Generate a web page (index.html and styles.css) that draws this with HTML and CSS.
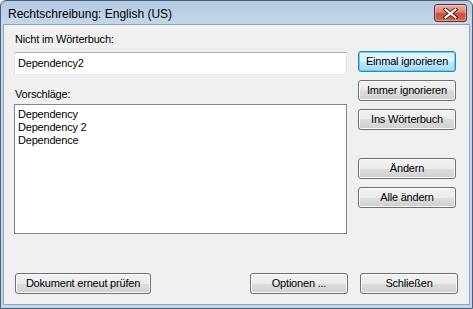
FILE: index.html
```html
<!DOCTYPE html>
<html>

<head>
    <title>Rechtschreibung: English (US)</title>
    <meta name="viewport" content="width=device-width, initial-scale=1.0">
    <link rel="stylesheet" href="styles.css">
</head>

<body>
    <div class="window">
        <header class="titlebar">
            <span class="title">Rechtschreibung: English (US)</span>
            <span class="close">
                <svg width="17" height="11" viewBox="0 0 17 11">
                    <path d="M3.5 1.5 L13.5 9.5 M13.5 1.5 L3.5 9.5" stroke="#5a1a10" stroke-width="4" stroke-linecap="square" />
                    <path d="M3.5 1.5 L13.5 9.5 M13.5 1.5 L3.5 9.5" stroke="#fff" stroke-width="2" stroke-linecap="square" />
                </svg>
            </span>
        </header>
        <main class="client">
            <div class="main">
                <div class="left">
                    <label class="label first">Nicht im Wörterbuch:</label>
                    <div class="textbox">Dependency2</div>
                    <label class="label second">Vorschläge:</label>
                    <ul class="listbox">
                        <li>Dependency</li>
                        <li>Dependency 2</li>
                        <li>Dependence</li>
                    </ul>
                </div>
                <div class="right">
                    <button class="btn default">Einmal ignorieren</button>
                    <button class="btn">Immer ignorieren</button>
                    <button class="btn">Ins Wörterbuch</button>
                    <button class="btn spaced">Ändern</button>
                    <button class="btn">Alle ändern</button>
                </div>
            </div>
            <div class="footer">
                <button class="btn wide">Dokument erneut prüfen</button>
                <button class="btn push">Optionen ...</button>
                <button class="btn">Schließen</button>
            </div>
        </main>
    </div>
</body>

</html>
```

FILE: styles.css
```css
body {
    margin: 0;
    font-family: "Liberation Sans", Arial, sans-serif;
    font-size: 11px;
    letter-spacing: -0.2px;
    color: #000;
    background: #fff;
}

.window {
    width: 473px;
    height: 309px;
    box-sizing: border-box;
    border: 1px solid #4f5e73;
    border-radius: 6px 6px 0 0;
    background: linear-gradient(#b3c9e3 0, #c6d7eb 24px, #c3d6ec 100%);
    display: flex;
    flex-direction: column;
}

.titlebar {
    height: 23px;
    display: flex;
    align-items: center;
    padding: 0 5px 0 7px;
}

.title {
    font-size: 12px;
    letter-spacing: 0;
    flex: 1;
    padding-top: 2px;
}

.close {
    width: 31px;
    height: 16px;
    border: 1px solid #6e2a22;
    border-radius: 3px;
    background: linear-gradient(#eab0a3 0%, #d88270 45%, #c3503c 55%, #cd6a53 100%);
    box-shadow: inset 0 0 0 1px rgba(255, 255, 255, .35);
    display: flex;
    align-items: center;
    justify-content: center;
    margin-top: 1px;
}

.client {
    flex: 1;
    margin: 0 2px 3px 2px;
    border: 1px solid #8ea5c2;
    background: #f0f0f0;
    padding: 8px 0 0 10px;
}

.main {
    display: flex;
}

.left {
    width: 333px;
    display: flex;
    flex-direction: column;
}

.label {
    line-height: 13px;
    padding-left: 1px;
}

.label.first {
    margin-bottom: 6px;
}

.label.second {
    margin: 13px 0 3px;
}

.textbox {
    height: 23px;
    box-sizing: border-box;
    border: 1px solid;
    border-color: #abadb3 #dbdfe6 #e3e9ef #e2e3ea;
    background: #fff;
    line-height: 21px;
    padding-left: 3px;
}

.listbox {
    height: 130px;
    box-sizing: border-box;
    margin: 0;
    padding: 3px 0 0 3px;
    list-style: none;
    border: 1px solid #828790;
    background: #fff;
}

.listbox li {
    line-height: 13px;
}

.right {
    margin-left: 11px;
    padding-top: 18px;
    display: flex;
    flex-direction: column;
    gap: 8px;
}

.btn {
    width: 98px;
    height: 21px;
    box-sizing: border-box;
    padding: 0;
    border: 1px solid #707070;
    border-radius: 3px;
    background: linear-gradient(#f2f2f2 0%, #ebebeb 50%, #dddddd 50%, #cfcfcf 100%);
    box-shadow: inset 0 0 0 1px #fbfbfb;
    font-family: inherit;
    font-size: 11px;
    letter-spacing: -0.2px;
    color: #000;
    line-height: 19px;
}

.btn.default {
    border-color: #3c7fb1;
    background: linear-gradient(#eaf6fd 0%, #d9f0fc 50%, #bee6fd 50%, #a7d9f5 100%);
    box-shadow: inset 0 0 0 1px #48d8fb;
}

.btn.spaced {
    margin-top: 20px;
}

.footer {
    display: flex;
    margin-top: 39px;
    padding-left: 1px;
}

.btn.wide {
    width: 136px;
}

.btn.push {
    margin-left: auto;
    margin-right: 12px;
}

.footer .btn:last-child {
    margin-right: 11px;
}
```
